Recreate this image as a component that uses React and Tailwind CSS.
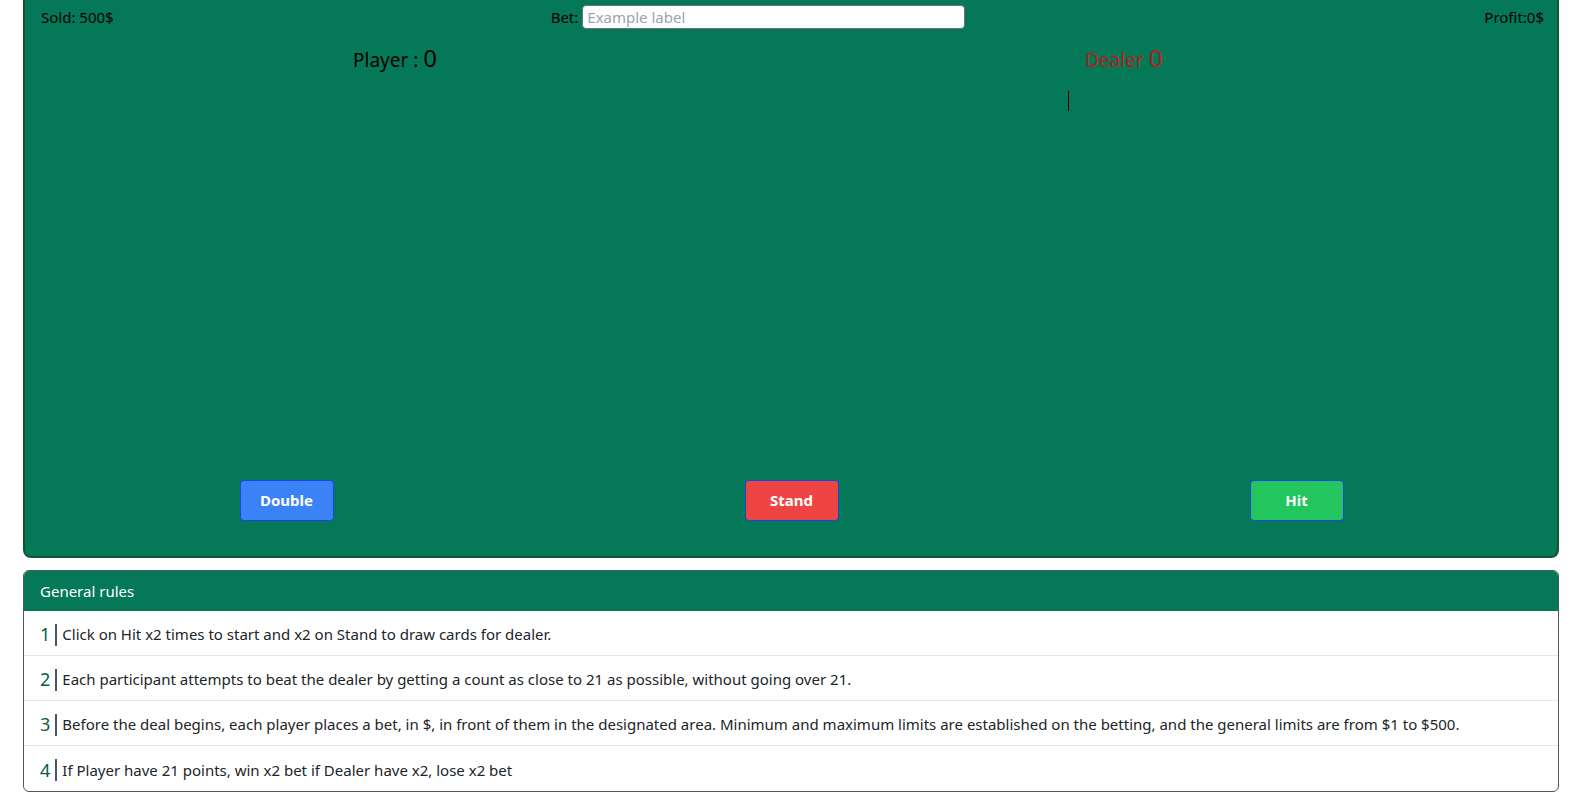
import React from 'react';

const rules = [
  'Click on Hit x2 times to start and x2 on Stand to draw cards for dealer.',
  'Each participant attempts to beat the dealer by getting a count as close to 21 as possible, without going over 21.',
  'Before the deal begins, each player places a bet, in $, in front of them in the designated area. Minimum and maximum limits are established on the betting, and the general limits are from $1 to $500.',
  'If Player have 21 points, win x2 bet if Dealer have x2, lose x2 bet',
];

const buttons = [
  { label: 'Double', color: 'bg-[#3b82f6]' },
  { label: 'Stand', color: 'bg-[#ef4444]' },
  { label: 'Hit', color: 'bg-[#22c55e]' },
];

export default function App() {
  return (
    <div className="min-h-screen bg-white font-['Noto_Sans',sans-serif] text-[#212529]">
      <div className="ml-[23px] w-[1536px]">
        {/* table */}
        <div className="flex h-[558px] flex-col rounded-b-lg border-x-2 border-b-2 border-[#14532d] bg-[#047857]">
          <div className="flex h-[34px] items-center pl-[16px] pr-[13px] text-[15px] text-black">
            <span>Sold: 500$</span>
            <div className="ml-[437px] flex items-center gap-[4px]">
              <span>Bet:</span>
              <input
                type="text"
                placeholder="Example label"
                className="h-[24px] w-[383px] rounded border border-gray-500 bg-white px-[4px] text-[15px] text-black placeholder:text-[#9ca3af] focus:outline-none"
              />
            </div>
            <span className="ml-auto">Profit:0$</span>
          </div>

          <div className="flex h-[47px] items-center">
            <div className="ml-[328px] text-[19px] text-black">
              Player <span>: </span><span className="text-[24px]">0</span>
            </div>
            <div className="ml-[648px] text-[19px] text-[#b91c1c]">
              Dealer <span className="text-[24px]">0</span>
            </div>
          </div>

          <div className="flex flex-1 flex-col">
            <div className="ml-[1043px] mt-[10px] h-[20px] w-px bg-black"></div>
          </div>

          <div className="mb-[35px] grid grid-cols-3 justify-items-center pl-[9px] pr-[8px]">
            {buttons.map((b) => (
              <button
                key={b.label}
                className={`h-[41px] w-[94px] rounded border border-blue-700 text-[15px] font-bold text-white ${b.color}`}
              >
                {b.label}
              </button>
            ))}
          </div>
        </div>

        {/* rules */}
        <div className="mt-[12px] overflow-hidden rounded-md border border-gray-600">
          <div className="flex h-[40px] items-center bg-[#047857] px-[16px] text-[15px] text-white">
            General rules
          </div>
          {rules.map((r, i) => (
            <div
              key={i}
              className={`flex h-[45px] items-center px-[16px] pt-[3px] text-[15px] ${i < rules.length - 1 ? 'border-b border-gray-200' : ''}`}
            >
              <span className="text-[18px] text-[#065f46]">{i + 1}</span>
              <span className="ml-[5px] mr-[5px] h-[22px] w-[2px] bg-gray-600"></span>
              <span>{r}</span>
            </div>
          ))}
        </div>
      </div>
    </div>
  );
}
